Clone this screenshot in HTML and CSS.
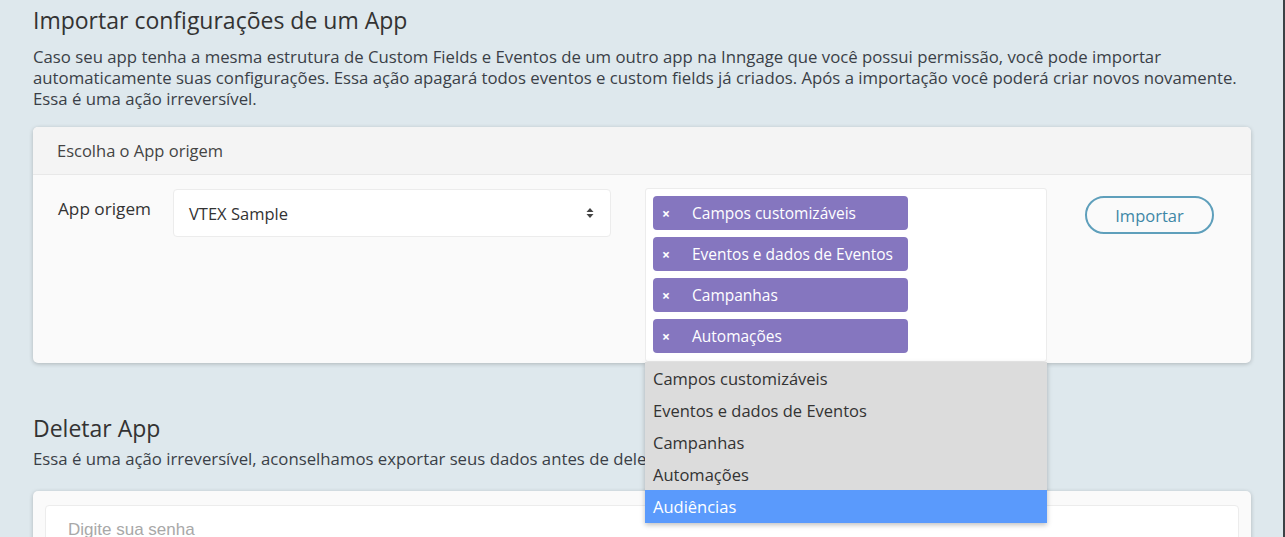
FILE: index.html
```html
<!DOCTYPE html>
<html lang="pt-BR">
<head>
    <meta charset="UTF-8">
    <meta name="viewport" content="width=device-width, initial-scale=1.0">
    <title>Configurações do App</title>
    <link rel="stylesheet" href="styles.css">
</head>
<body>
    <div class="page">
        <!-- Importar configurações -->
        <section class="section">
            <h2 class="section-title">Importar configurações de um App</h2>
            <p class="section-text">Caso seu app tenha a mesma estrutura de Custom Fields e Eventos de um outro app na Inngage que você possui permissão, você pode importar automaticamente suas configurações. Essa ação apagará todos eventos e custom fields já criados. Após a importação você poderá criar novos novamente. Essa é uma ação irreversível.</p>
            <div class="card">
                <div class="card-header">Escolha o App origem</div>
                <div class="card-body import-row">
                    <label class="field-label">App origem</label>
                    <div class="select-box">
                        <span>VTEX Sample</span>
                        <svg class="select-arrows" width="8" height="12" viewBox="0 0 8 12">
                            <path d="M4 1 L7.5 5 L0.5 5 Z" fill="#444"/>
                            <path d="M4 11 L7.5 7 L0.5 7 Z" fill="#444"/>
                        </svg>
                    </div>
                    <div class="multi">
                        <div class="multi-box">
                            <div class="tag"><span class="tag-x">×</span>Campos customizáveis</div>
                            <div class="tag"><span class="tag-x">×</span>Eventos e dados de Eventos</div>
                            <div class="tag"><span class="tag-x">×</span>Campanhas</div>
                            <div class="tag"><span class="tag-x">×</span>Automações</div>
                        </div>
                        <ul class="dropdown">
                            <li>Campos customizáveis</li>
                            <li>Eventos e dados de Eventos</li>
                            <li>Campanhas</li>
                            <li>Automações</li>
                            <li class="active">Audiências</li>
                        </ul>
                    </div>
                    <div class="btn-cell">
                        <button class="btn-outline">Importar</button>
                    </div>
                </div>
            </div>
        </section>

        <!-- Deletar App -->
        <section class="section section-delete">
            <h2 class="section-title">Deletar App</h2>
            <p class="section-text">Essa é uma ação irreversível, aconselhamos exportar seus dados antes de deletar o app.</p>
            <div class="card card-plain">
                <input class="password" type="password" placeholder="Digite sua senha">
            </div>
        </section>
    </div>
</body>
</html>
```

FILE: styles.css
```css
/* base */
html, body {
    margin: 0;
    padding: 0;
    height: 100%;
    overflow: hidden;
}
body {
    background: #dee8ed;
    font-family: "Open Sans", "Liberation Sans", sans-serif;
    color: #333;
    border-right: 2px solid #3c4246;
    box-sizing: border-box;
}
.page {
    padding: 0 32px 0 33px;
}
.section-title {
    margin: 0;
    padding-top: 4px;
    font-size: 23px;
    font-weight: 400;
    line-height: 32px;
    color: #333;
}
.section-text {
    margin: 10px 0 0;
    font-size: 16.75px;
    line-height: 21px;
    color: #3a3f47;
}
/* cards */
.card {
    margin-top: 18px;
    background: #fafafa;
    border-radius: 5px;
    box-shadow: 0 1px 4px rgba(0, 0, 0, 0.22);
}
.card-header {
    height: 47px;
    padding: 0 24px;
    display: flex;
    align-items: center;
    background: #f4f4f4;
    border-bottom: 1px solid #e8e8e8;
    border-radius: 5px 5px 0 0;
    font-size: 16.5px;
    color: #444;
}
.import-row {
    display: grid;
    grid-template-columns: 81px 438px 402px 129px;
    column-gap: 34px;
    padding: 13px 0 1px 25px;
}
.import-row .field-label {
    padding-top: 9px;
    font-size: 17.2px;
    white-space: nowrap;
    color: #333;
}
.import-row .btn-cell {
    margin-left: 4px;
    padding-top: 8px;
}
/* select */
.select-box {
    height: 46px;
    margin-top: 1px;
    display: flex;
    align-items: center;
    justify-content: space-between;
    padding: 0 16px 0 15px;
    background: #fff;
    border: 1px solid #ececec;
    border-radius: 4px;
    font-size: 16.5px;
}
/* multi select */
.multi {
    position: relative;
}
.multi-box {
    display: flex;
    flex-direction: column;
    gap: 7px;
    padding: 7px 7px 8px;
    background: #fff;
    border: 1px solid #ececec;
    border-radius: 3px;
}
.tag {
    width: 255px;
    height: 34px;
    box-sizing: border-box;
    display: flex;
    align-items: center;
    background: #8576bf;
    border-radius: 4px;
    color: #fff;
    font-size: 15.5px;
}
.tag-x {
    width: 39px;
    padding-left: 9px;
    box-sizing: border-box;
    font-size: 14px;
    font-weight: 700;
}
.dropdown {
    position: absolute;
    left: 0;
    right: 0;
    top: 100%;
    margin: 0;
    padding: 0;
    list-style: none;
    background: #dcdcdc;
    box-shadow: 0 2px 5px rgba(0, 0, 0, 0.25);
    z-index: 5;
}
.dropdown li {
    height: 32px;
    padding: 0 8px;
    display: flex;
    align-items: center;
    font-size: 16.5px;
    color: #333;
}
.dropdown li.active {
    height: 33px;
    background: #5a9afc;
    color: #fff;
}
/* button */
.btn-outline {
    width: 129px;
    height: 38px;
    background: transparent;
    border: 2px solid #5e9fbb;
    border-radius: 20px;
    color: #3e87a6;
    font-family: "Open Sans", "Liberation Sans", sans-serif;
    font-size: 16.5px;
}
/* delete section */
.section-delete {
    margin-top: 45px;
}
.section-delete .section-text {
    margin-top: 4px;
}
.card-plain {
    margin-top: 22px;
    padding: 14px 12px;
}
.password {
    display: block;
    width: 100%;
    height: 50px;
    box-sizing: border-box;
    padding: 0 22px;
    background: #fff;
    border: 1px solid #ececec;
    border-radius: 4px;
    font-family: "Liberation Sans", Arial, sans-serif;
    font-size: 17px;
}
.password::placeholder {
    color: #a8a8a8;
}
```
